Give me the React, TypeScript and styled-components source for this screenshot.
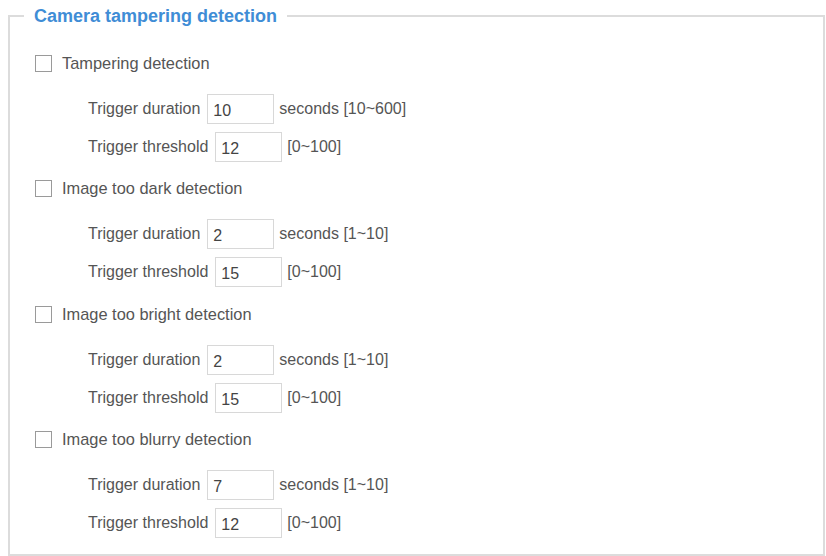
import React from "react";
import styled, { createGlobalStyle } from "styled-components";

const Global = createGlobalStyle`
  html, body { margin: 0; padding: 0; background: #ffffff; }
  body { font-family: "Liberation Sans", Arial, sans-serif; color: #555; }
`;

const Frame = styled.fieldset`
  margin: 5px 1px 0 8px;
  padding: 0;
  min-width: 0;
  border: 2px solid #dcdcdc;
  height: 551px;
  box-sizing: border-box;
`;

const Legend = styled.legend`
  margin-left: 14px;
  padding: 0 10px;
  font-family: "Liberation Sans", Arial, sans-serif;
  font-weight: bold;
  font-size: 18px;
  line-height: 22px;
  color: #3f8dd6;
`;

const Body = styled.div`
  padding: 21px 0 14px 25px;
  display: flex;
  flex-direction: column;
`;

const Group = styled.section`
  display: flex;
  flex-direction: column;
  margin-bottom: 11.3px;
`;

const CheckRow = styled.label`
  display: flex;
  align-items: center;
  height: 30px;
  padding-top: 1px;
  box-sizing: border-box;
  font-size: 16.4px;
  color: #555;
`;

const Box = styled.span`
  width: 17px;
  height: 17px;
  box-sizing: border-box;
  border: 1.5px solid #9a9a9a;
  background: #fff;
  margin-right: 10px;
  flex: none;
`;

const FieldRow = styled.div<{ $first?: boolean }>`
  display: flex;
  align-items: center;
  height: 30px;
  margin-top: ${(p) => (p.$first ? "16px" : "8px")};
  padding-left: 53px;
  font-size: 16px;
  color: #555;
`;

const Input = styled.input`
  width: 67px;
  height: 30px;
  box-sizing: border-box;
  margin: 0 5px 0 7px;
  padding: 4px 0 0 5px;
  border: 1px solid #d8d8d8;
  font-family: "Liberation Sans", Arial, sans-serif;
  font-size: 16px;
  color: #444;
  background: #fff;
  outline: none;
`;

type Item = {
  title: string;
  duration: string;
  durRange: string;
  threshold: string;
};

const items: Item[] = [
  { title: "Tampering detection", duration: "10", durRange: "seconds [10~600]", threshold: "12" },
  { title: "Image too dark detection", duration: "2", durRange: "seconds [1~10]", threshold: "15" },
  { title: "Image too bright detection", duration: "2", durRange: "seconds [1~10]", threshold: "15" },
  { title: "Image too blurry detection", duration: "7", durRange: "seconds [1~10]", threshold: "12" },
];

export default function App() {
  return (
    <>
      <Global />
      <Frame>
        <Legend>Camera tampering detection</Legend>
        <Body>
          {items.map((it) => (
            <Group key={it.title}>
              <CheckRow>
                <Box />
                {it.title}
              </CheckRow>
              <FieldRow $first>
                Trigger duration
                <Input defaultValue={it.duration} />
                {it.durRange}
              </FieldRow>
              <FieldRow>
                Trigger threshold
                <Input defaultValue={it.threshold} />
                [0~100]
              </FieldRow>
            </Group>
          ))}
        </Body>
      </Frame>
    </>
  );
}
